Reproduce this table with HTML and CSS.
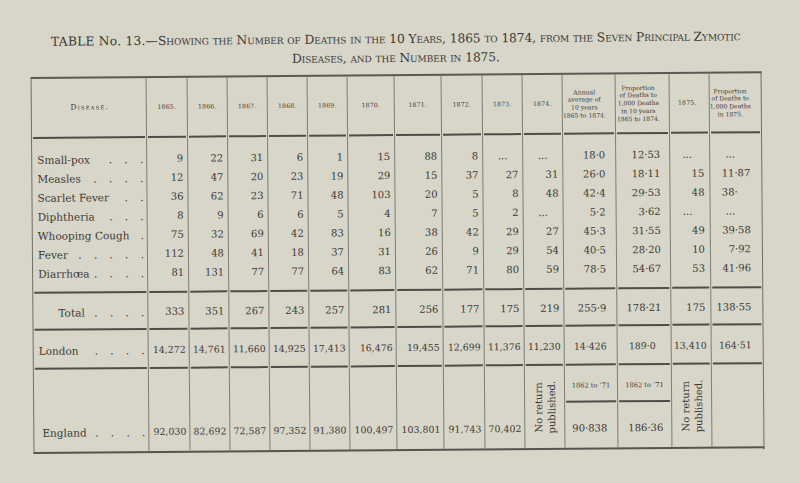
FILE: index.html
```html
<!DOCTYPE html>
<html lang="en">
<head>
<meta charset="utf-8">
<title>Table No. 13</title>
<link rel="stylesheet" href="styles.css">
</head>
<body>
<div class="page">
  <h1 class="title"><span class="lead">TABLE No. 13.—</span>Showing the Number of Deaths in the 10 Years, 1865 to 1874, from the Seven Principal Zymotic<br>Diseases, and the Number in 1875.</h1>
  <div class="grid">
    <div class="row hd ruled">
      <div class="c dis">Disease.</div>
      <div class="c yr">1865.</div>
      <div class="c yr">1866.</div>
      <div class="c yr">1867.</div>
      <div class="c yr">1868.</div>
      <div class="c yr">1869.</div>
      <div class="c yr">1870.</div>
      <div class="c yr">1871.</div>
      <div class="c yr">1872.</div>
      <div class="c yr">1873.</div>
      <div class="c yr">1874.</div>
      <div class="c ml">Annual<br>average of<br>10 years<br>1865 to 1874.</div>
      <div class="c ml">Proportion<br>of Deaths to<br>1,000 Deaths<br>in 10 years<br>1865 to 1874.</div>
      <div class="c yr">1875.</div>
      <div class="c ml">Proportion<br>of Deaths to<br>1,000 Deaths<br>in 1875.</div>
    </div>

    <div class="row first">
      <div class="c lbl"><span>Small-pox</span><span class="dots">. . .</span></div>
      <div class="c">9</div><div class="c">22</div><div class="c">31</div><div class="c">6</div><div class="c">1</div>
      <div class="c">15</div><div class="c">88</div><div class="c">8</div><div class="c dt">...</div><div class="c dt">...</div>
      <div class="c">18·0</div><div class="c">12·53</div><div class="c dt">...</div><div class="c dt">...</div>
    </div>
    <div class="row">
      <div class="c lbl"><span>Measles</span><span class="dots">. . . .</span></div>
      <div class="c">12</div><div class="c">47</div><div class="c">20</div><div class="c">23</div><div class="c">19</div>
      <div class="c">29</div><div class="c">15</div><div class="c">37</div><div class="c">27</div><div class="c">31</div>
      <div class="c">26·0</div><div class="c">18·11</div><div class="c">15</div><div class="c">11·87</div>
    </div>
    <div class="row">
      <div class="c lbl"><span>Scarlet Fever</span><span class="dots">. .</span></div>
      <div class="c">36</div><div class="c">62</div><div class="c">23</div><div class="c">71</div><div class="c">48</div>
      <div class="c">103</div><div class="c">20</div><div class="c">5</div><div class="c">8</div><div class="c">48</div>
      <div class="c">42·4</div><div class="c">29·53</div><div class="c">48</div><div class="c">38·<span class="ghost">00</span></div>
    </div>
    <div class="row">
      <div class="c lbl"><span>Diphtheria</span><span class="dots">. . .</span></div>
      <div class="c">8</div><div class="c">9</div><div class="c">6</div><div class="c">6</div><div class="c">5</div>
      <div class="c">4</div><div class="c">7</div><div class="c">5</div><div class="c">2</div><div class="c dt">...</div>
      <div class="c">5·2</div><div class="c">3·62</div><div class="c dt">...</div><div class="c dt">...</div>
    </div>
    <div class="row">
      <div class="c lbl"><span>Whooping Cough</span><span class="dots">.</span></div>
      <div class="c">75</div><div class="c">32</div><div class="c">69</div><div class="c">42</div><div class="c">83</div>
      <div class="c">16</div><div class="c">38</div><div class="c">42</div><div class="c">29</div><div class="c">27</div>
      <div class="c">45·3</div><div class="c">31·55</div><div class="c">49</div><div class="c">39·58</div>
    </div>
    <div class="row">
      <div class="c lbl"><span>Fever</span><span class="dots">. . . . .</span></div>
      <div class="c">112</div><div class="c">48</div><div class="c">41</div><div class="c">18</div><div class="c">37</div>
      <div class="c">31</div><div class="c">26</div><div class="c">9</div><div class="c">29</div><div class="c">54</div>
      <div class="c">40·5</div><div class="c">28·20</div><div class="c">10</div><div class="c">7·92</div>
    </div>
    <div class="row last ruled">
      <div class="c lbl"><span>Diarrhœa</span><span class="dots">. . . .</span></div>
      <div class="c">81</div><div class="c">131</div><div class="c">77</div><div class="c">77</div><div class="c">64</div>
      <div class="c">83</div><div class="c">62</div><div class="c">71</div><div class="c">80</div><div class="c">59</div>
      <div class="c">78·5</div><div class="c">54·67</div><div class="c">53</div><div class="c">41·96</div>
    </div>

    <div class="row ruled">
      <div class="c lbl total"><span>Total</span><span class="dots">. . . .</span></div>
      <div class="c">333</div><div class="c">351</div><div class="c">267</div><div class="c">243</div><div class="c">257</div>
      <div class="c">281</div><div class="c">256</div><div class="c">177</div><div class="c">175</div><div class="c">219</div>
      <div class="c">255·9</div><div class="c">178·21</div><div class="c">175</div><div class="c">138·55</div>
    </div>

    <div class="row ruled big">
      <div class="c lbl"><span>London</span><span class="dots">. . . .</span></div>
      <div class="c">14,272</div><div class="c">14,761</div><div class="c">11,660</div><div class="c">14,925</div><div class="c">17,413</div>
      <div class="c">16,476</div><div class="c">19,455</div><div class="c">12,699</div><div class="c">11,376</div><div class="c">11,230</div>
      <div class="c">14·426</div><div class="c">189·0<span class="ghost">0</span></div><div class="c">13,410</div><div class="c">164·51</div>
    </div>

    <div class="row eng big">
      <div class="c lbl england"><span>England</span><span class="dots">. . . .</span></div>
      <div class="c">92,030</div><div class="c">82,692</div><div class="c">72,587</div><div class="c">97,352</div><div class="c">91,380</div>
      <div class="c">100,497</div><div class="c">103,801</div><div class="c">91,743</div><div class="c">70,402</div>
      <div class="c vc"><span class="vert">No return<br>published.</span></div>
      <div class="c period">1862 to ’71</div>
      <div class="c period">1862 to ’71</div>
      <div class="c vc"><span class="vert">No return<br>published.</span></div>
      <div class="c blank"></div>
    </div>
    <div class="row engb">
      <div class="c ann">90·838</div>
      <div class="c prop">186·36</div>
    </div>
  </div>
</div>
</body>
</html>
```
FILE: styles.css
```css
html, body {
  margin: 0;
  padding: 0;
}

body {
  width: 800px;
  height: 483px;
  overflow: hidden;
  background: #d8d5c9;
}

.page {
  padding: 30px 0 0 32px;
  color: #3a3935;
  font-family: "DejaVu Serif", "Liberation Serif", serif;
  transform: rotate(-0.45deg);
  transform-origin: 400px 260px;
}

.title {
  margin: 0;
  width: 731px;
  text-align: center;
  font-weight: normal;
  font-size: 12.3px;
  line-height: 19px;
  font-variant: small-caps;
  letter-spacing: -0.1px;
  white-space: nowrap;
}

.title .lead {
  font-variant: normal;
  letter-spacing: 0.2px;
}

.grid {
  margin-top: 6px;
  width: 731px;
  box-sizing: border-box;
  display: grid;
  grid-template-columns: 115px 41px 40px 40px 40px 40px 47px 47px 41px 40px 40px 53px 54px 40px 51px;
  grid-template-rows: 60px 30px 19px 19px 19px 19px 19px 30px 37px 39px 37px 45px;
  border-left: 1px solid #6f6e67;
  border-right: 1px solid #6f6e67;
  border-top: 2px solid #5a5954;
  border-bottom: 2px solid #55544f;
}

.row {
  display: contents;
}

.c {
  box-sizing: border-box;
  min-width: 0;
  display: flex;
  align-items: center;
  justify-content: flex-end;
  padding: 0 4px 0 0;
  border-right: 1px solid #7e7d76;
  font-size: 10px;
  line-height: 12px;
  white-space: nowrap;
}

.big > .c {
  font-size: 9.4px;
  padding-right: 3px;
}

.row:not(.engb) > .c:last-child {
  border-right: none;
}

.row > .c:nth-child(12) {
  padding-right: 10px;
}

.row > .c:nth-child(13) {
  padding-right: 9px;
}

.row > .c:nth-child(14) {
  padding-right: 5px;
}

.row > .c:nth-child(15) {
  padding-right: 11px;
}

.big > .c:nth-child(14) {
  padding-right: 4px;
}

.first > .c {
  padding-top: 11px;
}

.last > .c {
  padding-bottom: 11px;
}

.ruled > .c {
  background-image: linear-gradient(#4e4d48, #4e4d48);
  background-repeat: no-repeat;
  background-size: calc(100% - 2px) 2px;
  background-position: center bottom;
}

/* header */
.hd > .c {
  justify-content: center;
  text-align: center;
  padding: 0 1px 2px 1px;
}

.hd > .yr {
  font-size: 6.2px;
  line-height: 8px;
  letter-spacing: 0.2px;
}

.hd > .ml {
  font-size: 6.1px;
  line-height: 7.7px;
}

.hd > .dis {
  font-size: 7.5px;
  font-variant: small-caps;
  letter-spacing: 1.3px;
  padding-left: 3px;
}

/* labels */
.c.lbl,
.big > .c.lbl {
  justify-content: space-between;
  padding-left: 5px;
  padding-right: 3px;
  font-size: 10.5px;
}

.dots {
  word-spacing: 8.9px;
}

.c.lbl.total {
  padding-left: 25px;
}

.c.dt {
  justify-content: center;
  padding-right: 0;
  padding-left: 0;
}

.ghost {
  visibility: hidden;
}

/* England */
.eng > .c {
  grid-row: span 2;
  align-items: flex-end;
  padding-bottom: 13px;
}

.big > .c.lbl.england {
  padding-left: 8px;
}

.eng > .c.period {
  grid-row: span 1;
  align-items: center;
  justify-content: center;
  padding: 3px 0 0 0;
  font-size: 6.7px;
  background-image: linear-gradient(#4e4d48, #4e4d48);
  background-repeat: no-repeat;
  background-size: calc(100% - 2px) 2px;
  background-position: center bottom;
}

.eng > .c.vc {
  align-items: center;
  justify-content: center;
  padding: 0;
}

.vert {
  writing-mode: vertical-rl;
  transform: rotate(180deg);
  font-size: 10px;
  line-height: 13px;
  text-align: center;
}

.engb > .c {
  align-items: flex-end;
  padding-bottom: 13px;
  font-size: 10px;
}

.engb > .c.ann {
  padding-right: 10px;
}

.engb > .c.prop {
  padding-right: 8px;
}
```
